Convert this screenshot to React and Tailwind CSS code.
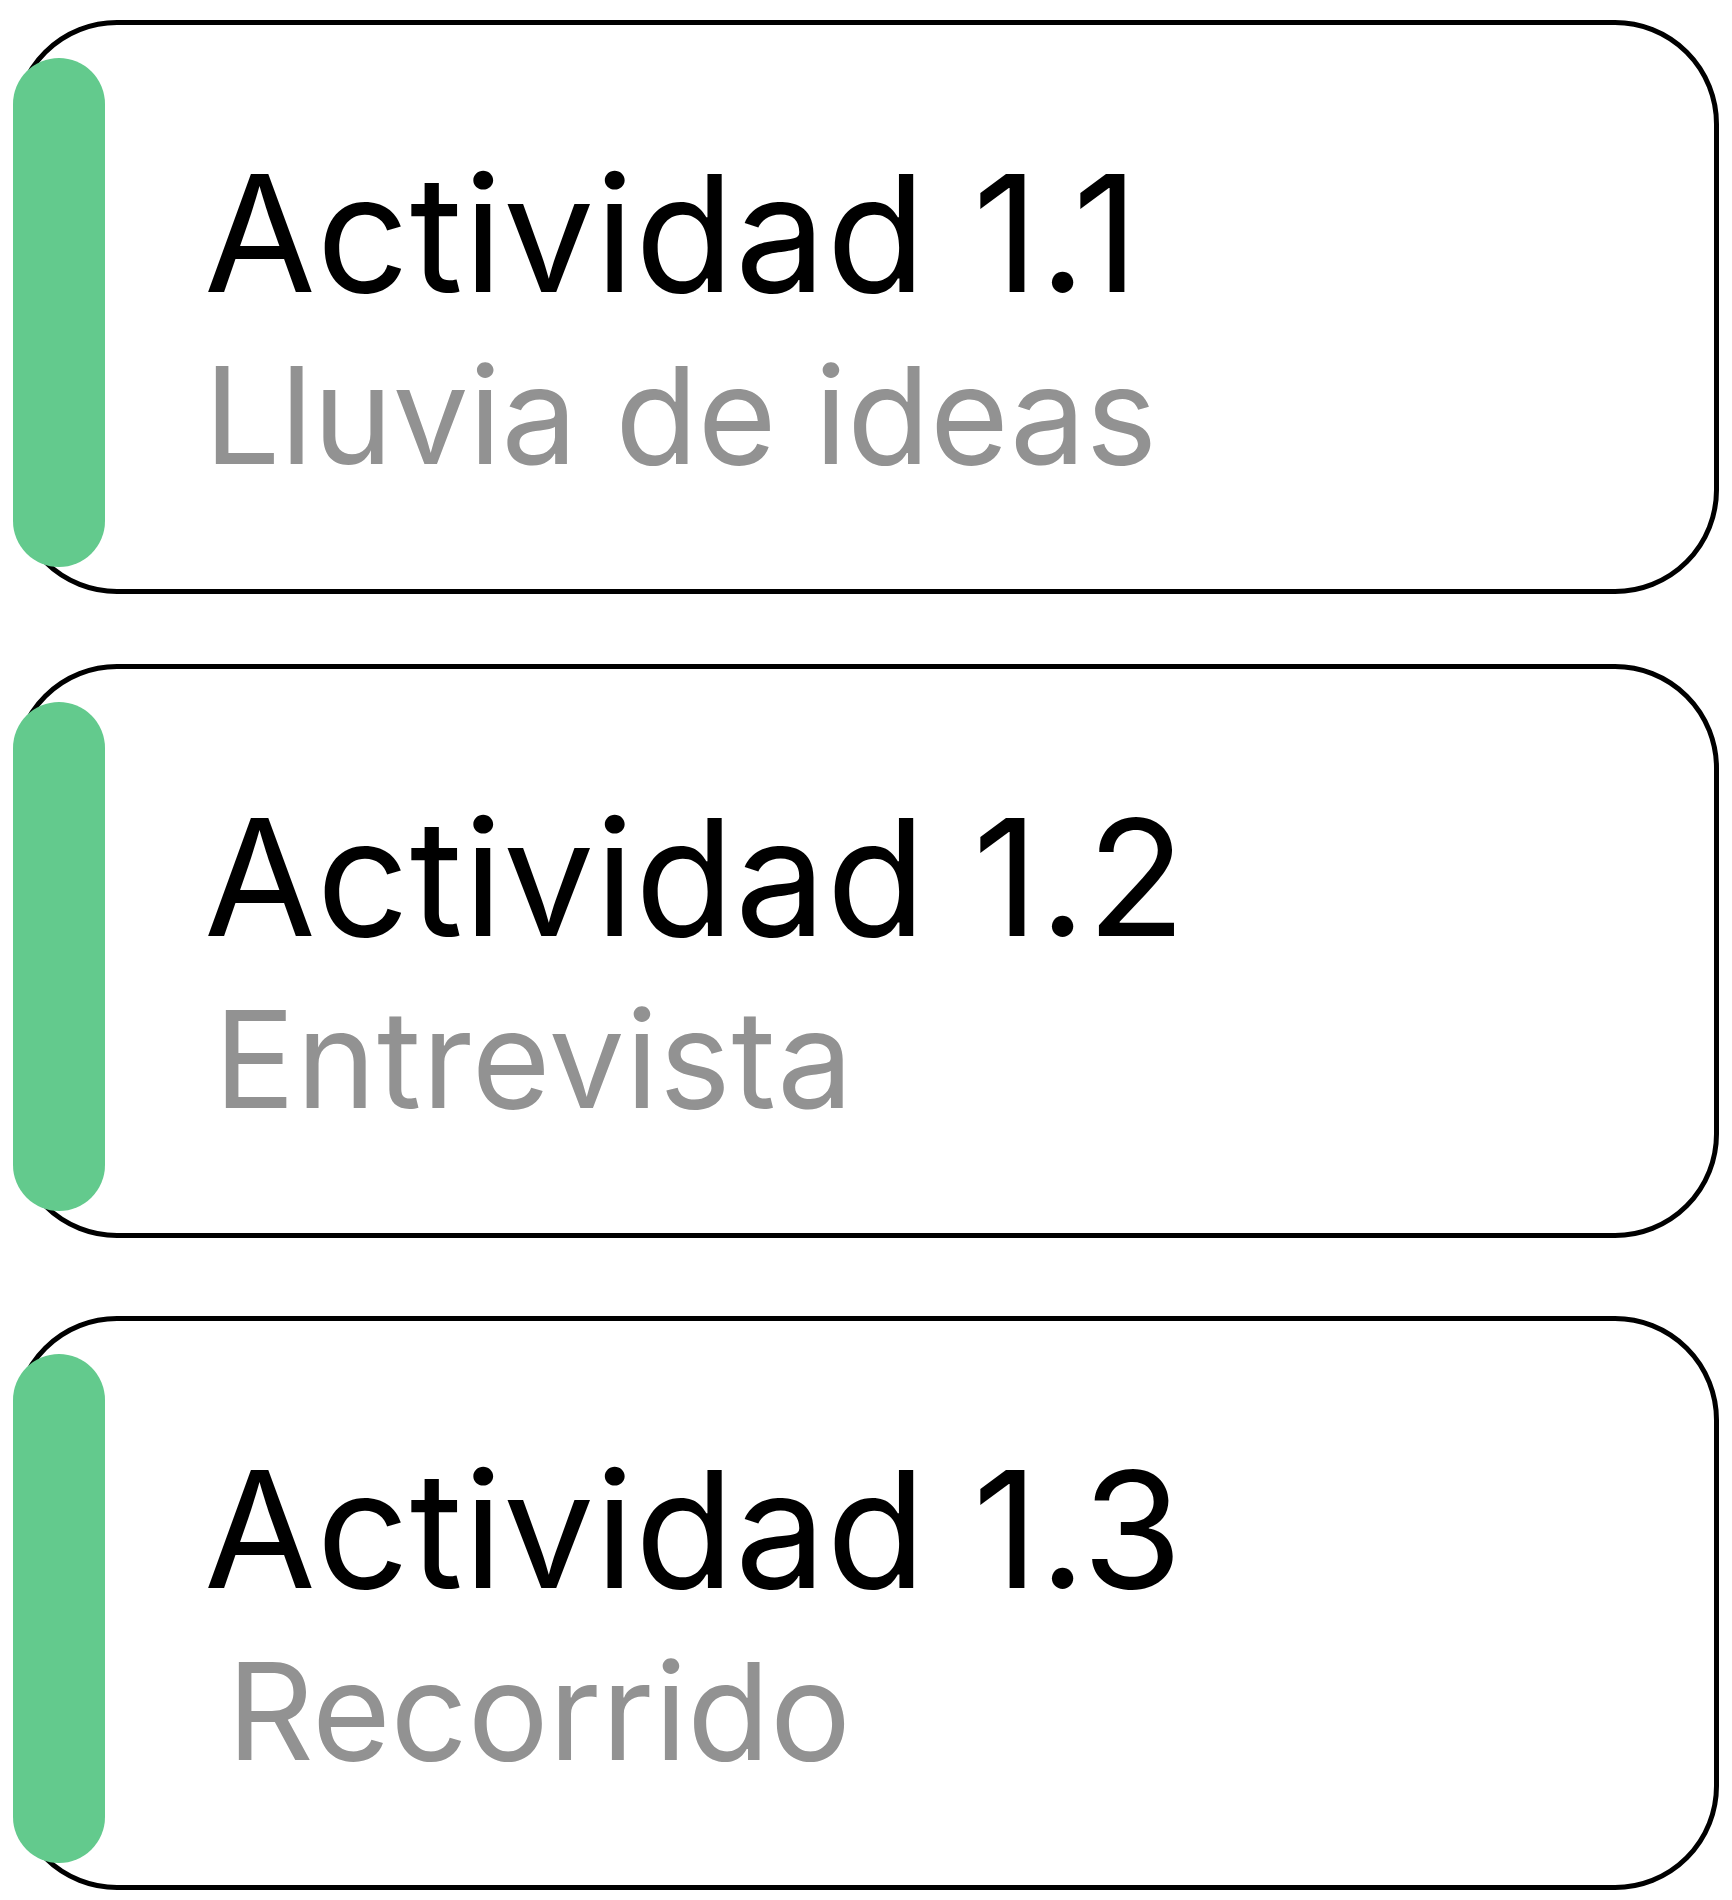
export default function App() {
  const items = [
    { title: "Actividad 1.1", sub: "Lluvia de ideas", subClass: "ml-0", cardClass: "" },
    { title: "Actividad 1.2", sub: "Entrevista", subClass: "ml-[10px] tracking-[1px]", cardClass: "mt-[70px]" },
    { title: "Actividad 1.3", sub: "Recorrido", subClass: "ml-[23px]", cardClass: "mt-[78px]" },
  ];
  return (
    <div
      className="w-[1732px] h-[1900px] bg-white pl-[13px] pr-[13px] pt-[20px]"
      style={{ fontFamily: "Inter, 'Noto Sans', sans-serif" }}
    >
      {items.map((it) => (
        <div
          key={it.title}
          className={`relative h-[574px] rounded-[104px] border-[5px] border-black bg-white pl-[186px] pt-[127px] flex flex-col ${it.cardClass}`}
        >
          <div className="absolute left-[-5px] top-[33px] h-[509px] w-[92px] rounded-full bg-[#63ca8d]" />
          <div className="text-[162px] leading-none tracking-[0.7px] text-black whitespace-nowrap">{it.title}</div>
          <div className={`mt-[34px] text-[135px] leading-none text-[#929292] whitespace-nowrap ${it.subClass}`}>
            {it.sub}
          </div>
        </div>
      ))}
    </div>
  );
}
